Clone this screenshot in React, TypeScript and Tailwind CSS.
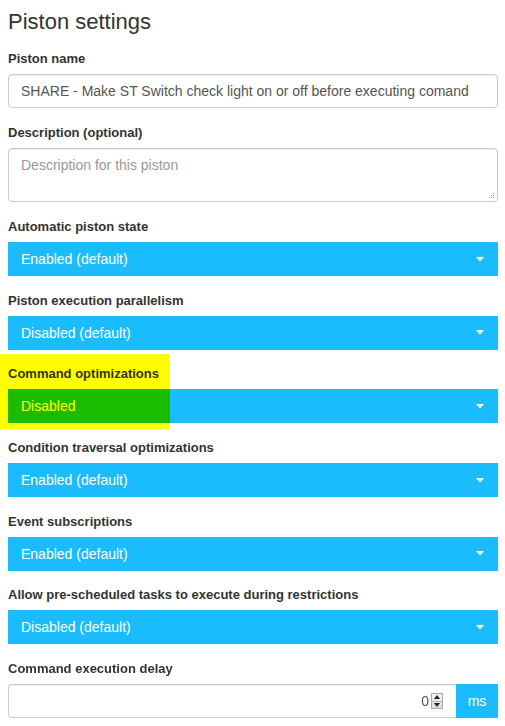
import React from "react";

const selects = [
  { label: "Automatic piston state", value: "Enabled (default)" },
  { label: "Piston execution parallelism", value: "Disabled (default)" },
  { label: "Command optimizations", value: "Disabled" },
  { label: "Condition traversal optimizations", value: "Enabled (default)" },
  { label: "Event subscriptions", value: "Enabled (default)" },
  { label: "Allow pre-scheduled tasks to execute during restrictions", value: "Disabled (default)" },
];

function Label({ children }: { children: React.ReactNode }) {
  return <label className="block font-bold text-[13px] leading-[20px] mb-[5px] text-[#333]">{children}</label>;
}

function BlueSelect({ value }: { value: string }) {
  return (
    <div className="h-[34px] w-full bg-[#1bbcfd] text-white text-[14px] leading-[34px] pl-[13px] pr-[13px] flex items-center justify-between">
      <span>{value}</span>
      <svg width="8" height="5" viewBox="0 0 8 5" className="mr-[1px]">
        <path d="M0 0 L8 0 L4 4.5 Z" fill="#fff" />
      </svg>
    </div>
  );
}

function Spinner() {
  return (
    <div className="w-[12px] h-[16px] border border-[#a9a9a9] bg-gradient-to-b from-[#f4f4f4] to-[#dcdcdc] flex flex-col ml-[2px]">
      <div className="flex-1 flex items-center justify-center border-b border-[#b5b5b5]">
        <svg width="6" height="4" viewBox="0 0 6 4"><path d="M0 4 L6 4 L3 0 Z" fill="#222" /></svg>
      </div>
      <div className="flex-1 flex items-center justify-center">
        <svg width="6" height="4" viewBox="0 0 6 4"><path d="M0 0 L6 0 L3 4 Z" fill="#222" /></svg>
      </div>
    </div>
  );
}

export default function App() {
  return (
    <div className="relative w-[505px] bg-white pl-[8px] pr-[7px] font-['Liberation_Sans',Arial,sans-serif] text-[#333]">
      <div className="h-[49px] pt-[9px]">
        <h3 className="text-[22px] leading-[26px] font-normal text-[#333]">Piston settings</h3>
      </div>

      <div className="mb-[15px]">
        <Label>Piston name</Label>
        <div className="h-[34px] w-full border border-[#ccc] rounded-[4px] shadow-[inset_0_1px_1px_rgba(0,0,0,0.075)] px-[12px] text-[14px] leading-[32px] text-[#555] whitespace-nowrap overflow-hidden">
          SHARE - Make ST Switch check light on or off before executing comand
        </div>
      </div>

      <div className="mb-[15px]">
        <Label>Description (optional)</Label>
        <div className="relative h-[54px] w-full border border-[#ccc] rounded-[4px] shadow-[inset_0_1px_1px_rgba(0,0,0,0.075)] px-[12px] py-[6px] text-[14px] leading-[20px] text-[#999]">
          Description for this piston
          <svg width="7" height="7" viewBox="0 0 7 7" className="absolute right-[2px] bottom-[2px]">
            <g fill="#9a9a9a">
              <rect x="5" y="1" width="1" height="1" />
              <rect x="3" y="3" width="1" height="1" />
              <rect x="5" y="3" width="1" height="1" />
              <rect x="1" y="5" width="1" height="1" />
              <rect x="3" y="5" width="1" height="1" />
              <rect x="5" y="5" width="1" height="1" />
            </g>
          </svg>
        </div>
      </div>

      {selects.map((s) => (
        <div key={s.label} className="mb-[14.7px]">
          <Label>{s.label}</Label>
          <BlueSelect value={s.value} />
        </div>
      ))}

      <div className="mb-[15px]">
        <Label>Command execution delay</Label>
        <div className="flex h-[34px] w-full">
          <div className="flex-1 flex items-center justify-end border border-[#ccc] border-r-0 rounded-l-[4px] shadow-[inset_0_1px_1px_rgba(0,0,0,0.075)] pr-[13px] text-[14px] text-[#555]">
            <span>0</span>
            <Spinner />
          </div>
          <div className="w-[42px] bg-[#1bbcfd] text-white text-[14px] flex items-center justify-center">ms</div>
        </div>
      </div>

      <div className="absolute left-0 top-[354px] w-[170px] h-[75px] bg-[#ffff00] mix-blend-multiply pointer-events-none" />
    </div>
  );
}
